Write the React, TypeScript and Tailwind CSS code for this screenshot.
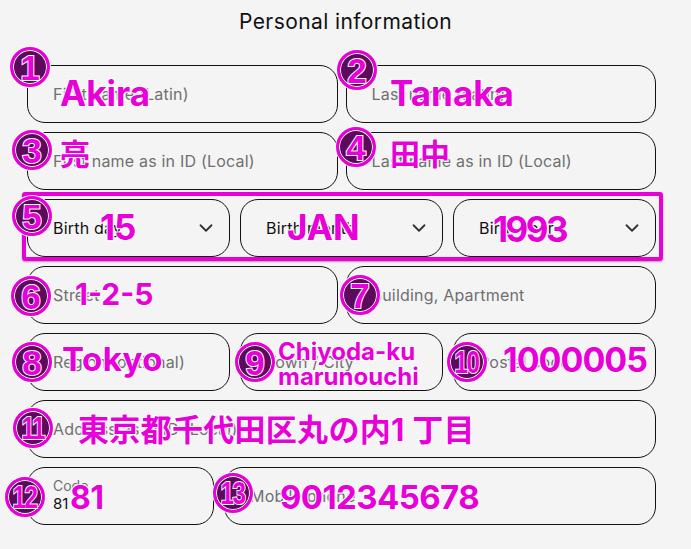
import { ChevronDown } from "lucide-react";

type Field = { label: string };

function TextField({ label }: Field) {
  return (
    <div className="h-[58px] rounded-[18px] border border-[#111] flex items-center pl-[25px] text-[16px] tracking-[0.2px] text-[#707070]">
      {label}
    </div>
  );
}

function SelectField({ label }: Field) {
  return (
    <div className="h-[58px] rounded-[18px] border border-[#111] flex items-center justify-between pl-[25px] pr-[12px] text-[16px] tracking-[0.2px] text-[#111]">
      <span>{label}</span>
      <ChevronDown size={22} strokeWidth={2} className="text-[#333]" />
    </div>
  );
}

function CodeField() {
  return (
    <div className="h-[58px] rounded-[18px] border border-[#111] flex flex-col justify-center pl-[25px]">
      <span className="text-[14px] leading-[16px] text-[#707070]">Code</span>
      <span className="text-[15px] leading-[20px] text-[#111]">81</span>
    </div>
  );
}

const badges = [
  { n: "1", x: 30, y: 67 },
  { n: "2", x: 357, y: 70 },
  { n: "3", x: 32, y: 150 },
  { n: "4", x: 356, y: 147 },
  { n: "5", x: 32, y: 216 },
  { n: "6", x: 31, y: 296 },
  { n: "7", x: 360, y: 295 },
  { n: "8", x: 32, y: 362 },
  { n: "9", x: 255, y: 362 },
  { n: "10", x: 467, y: 362 },
  { n: "11", x: 33, y: 428 },
  { n: "12", x: 25, y: 497 },
  { n: "13", x: 233, y: 493 },
];

// annotation values: left, top, font size, letter spacing
const notes = [
  { t: "Akira", x: 60, y: 76, s: 35, k: 0 },
  { t: "Tanaka", x: 390, y: 76, s: 35, k: 0 },
  { t: "亮", x: 60, y: 139, s: 30, k: 0 },
  { t: "田中", x: 390, y: 139, s: 30, k: 0 },
  { t: "15", x: 100, y: 210, s: 35, k: -1 },
  { t: "JAN", x: 287, y: 210, s: 35, k: 0 },
  { t: "1993", x: 493, y: 212, s: 35, k: -2.5 },
  { t: "1-2-5", x: 75, y: 279, s: 30, k: 0 },
  { t: "Tokyo", x: 62, y: 343, s: 33, k: 0.5 },
  { t: "1000005", x: 503, y: 343, s: 34, k: -1 },
  { t: "東京都千代田区丸の内1 丁目", x: 78, y: 414, s: 31, k: 0.3 },
  { t: "81", x: 70, y: 482, s: 32, k: -0.5 },
  { t: "9012345678", x: 280, y: 481, s: 33, k: -0.6 },
];

const stroke =
  "text-[#e800d8] font-bold [-webkit-text-stroke:2px_#fff] [paint-order:stroke_fill]";

export default function App() {
  return (
    <div className="relative w-[691px] h-[549px] overflow-hidden bg-[#f4f4f4] font-['Inter','Noto_Sans_CJK_JP',sans-serif]">
      <h2 className="pt-[10px] text-center text-[21px] leading-[24px] tracking-[0.4px] text-[#111]">
        Personal information
      </h2>

      <div className="ml-[27px] mt-[31px] w-[629px] flex flex-col gap-[9px]">
        <div className="grid grid-cols-2 gap-[8px]">
          <TextField label="First name (Latin)" />
          <TextField label="Last name (Latin)" />
        </div>
        <div className="grid grid-cols-2 gap-[8px]">
          <TextField label="First name as in ID (Local)" />
          <TextField label="Last name as in ID (Local)" />
        </div>
        <div className="grid grid-cols-3 gap-[10px]">
          <SelectField label="Birth day" />
          <SelectField label="Birth month" />
          <SelectField label="Birth year" />
        </div>
        <div className="grid grid-cols-2 gap-[8px]">
          <TextField label="Street" />
          <TextField label="Building, Apartment" />
        </div>
        <div className="grid grid-cols-3 gap-[10px]">
          <TextField label="Region (optional)" />
          <TextField label="Town / City" />
          <TextField label="Postal code" />
        </div>
        <TextField label="Address as in ID (Local)" />
        <div className="grid grid-cols-[187px_1fr] gap-[10px]">
          <CodeField />
          <TextField label="Mobile phone" />
        </div>
      </div>

      {/* highlight round the birth date row */}
      <div className="absolute left-[22px] top-[192px] w-[641px] h-[69px] border-[4px] border-[#e800d8] rounded-[3px] shadow-[0_1px_2px_rgba(0,0,0,0.35)]" />

      {notes.map((n) => (
        <span
          key={n.t}
          className={`absolute leading-none whitespace-nowrap ${stroke}`}
          style={{ left: n.x, top: n.y, fontSize: n.s, letterSpacing: n.k }}
        >
          {n.t}
        </span>
      ))}
      <span
        className={`absolute left-[278px] top-[339px] text-[24px] leading-[25px] ${stroke}`}
      >
        Chiyoda-ku
        <br />
        marunouchi
      </span>

      {badges.map((b) => (
        <div
          key={b.n}
          className="absolute w-[40px] h-[40px] rounded-full bg-[#5c0a5c] border-[3px] border-[#e800d8] shadow-[0_0_0_1px_#fff,inset_0_0_0_1px_#fff] flex items-center justify-center"
          style={{ left: b.x - 20, top: b.y - 20 }}
        >
          {b.n.length > 1 ? (
            <span
              className={`font-['Liberation_Sans',sans-serif] leading-none text-[31px] tracking-[-2px] pr-[2px] scale-x-[0.78] ${stroke}`}
            >
              {b.n}
            </span>
          ) : (
            <span
              className={`font-['Liberation_Sans',sans-serif] leading-none text-[35px] mt-[1px] ${stroke}`}
            >
              {b.n}
            </span>
          )}
        </div>
      ))}
    </div>
  );
}
